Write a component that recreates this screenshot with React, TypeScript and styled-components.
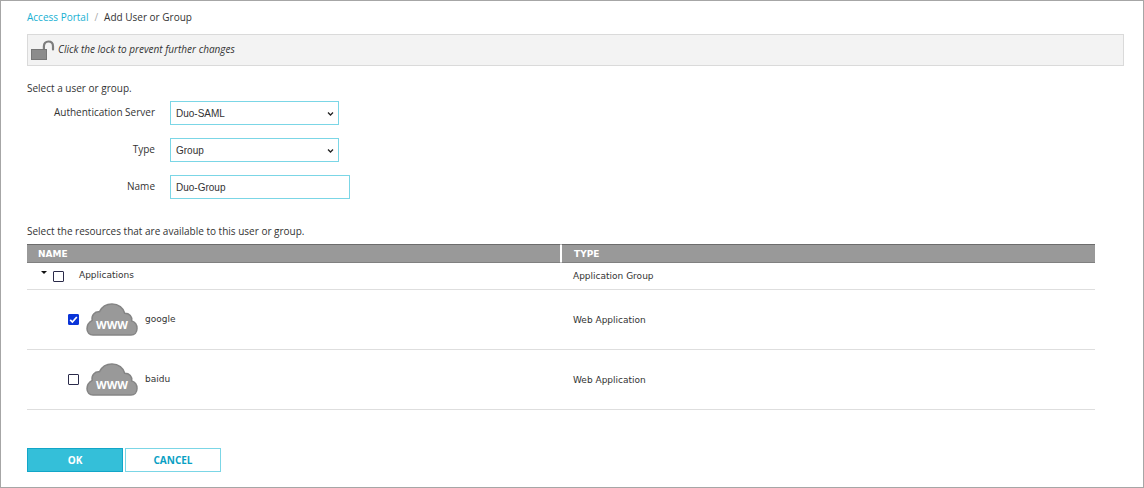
import React, { useState } from "react";
import styled, { createGlobalStyle } from "styled-components";

const GlobalStyle = createGlobalStyle`
  *, *::before, *::after { box-sizing: border-box; }
  body {
    margin: 0;
    background: #fff;
    color: #333;
    font-family: "Open Sans", "Noto Sans", sans-serif;
    font-size: 10px;
    line-height: 14px;
  }
`;

const Page = styled.main`
  min-height: 100vh;
  padding: 9px 19px 14px 26px;
  border: 1px solid #a6a6a6;
`;

const Breadcrumb = styled.nav`
  display: flex;
  gap: 6px;
`;

const Crumb = styled.a`
  color: #18b0d2;
  text-decoration: none;
`;

const Separator = styled.span`
  color: #aaa;
`;

const Notice = styled.div`
  display: flex;
  gap: 3px;
  height: 32px;
  margin-top: 10px;
  padding: 5px 3px;
  background: #f3f3f3;
  border: 1px solid #dadada;
  font-style: italic;
  line-height: 18px;
`;

const LockButton = styled.button`
  display: block;
  width: 24px;
  height: 21px;
  padding: 0;
  border: 0;
  background: none;
`;

const Prompt = styled.p<{ $top: number }>`
  margin: ${(p) => p.$top}px 0 6px;
`;

const Form = styled.form`
  display: grid;
  gap: 13px;
`;

const Field = styled.div`
  display: grid;
  grid-template-columns: 128px 1fr;
  column-gap: 15px;
  height: 24px;
`;

const Label = styled.label`
  text-align: right;
  line-height: 22px;
`;

const SelectWrap = styled.div`
  position: relative;
  width: 169px;
`;

const Select = styled.select`
  appearance: none;
  width: 100%;
  height: 24px;
  padding: 0 20px 0 5px;
  border: 1px solid #7bd6e6;
  border-radius: 0;
  background: #fff;
  color: #333;
  font: 10px "Liberation Sans", Arial, sans-serif;
`;

const Chevron = styled.svg`
  position: absolute;
  right: 5px;
  top: 10px;
  pointer-events: none;
`;

const TextInput = styled.input`
  width: 180px;
  height: 24px;
  padding: 0 5px;
  border: 1px solid #7bd6e6;
  border-radius: 0;
  color: #333;
  font: 10px "Liberation Sans", Arial, sans-serif;
`;

const Table = styled.table`
  width: calc(100% - 29px);
  table-layout: fixed;
  border-collapse: separate;
  border-spacing: 0;
  font-family: "DejaVu Sans", Verdana, sans-serif;
  font-size: 9px;
`;

const HeadCell = styled.th`
  height: 19px;
  padding: 0 11px;
  background: #999;
  border-top: 1px solid #6c6c6c;
  border-bottom: 1px solid #808080;
  color: #fff;
  text-align: left;
  font-size: 9px;
  line-height: 14px;
  &:first-child { border-right: 1px solid #fff; }
  & + & { border-left: 1px solid #fff; padding-left: 12px; }
`;

const Cell = styled.td<{ $tall?: boolean }>`
  height: ${(p) => (p.$tall ? 60 : 27)}px;
  padding: 0 12px;
  border-bottom: 1px solid #dedede;
  vertical-align: middle;
`;

const ResourceLine = styled.div<{ $child?: boolean }>`
  display: flex;
  align-items: center;
  padding-left: ${(p) => (p.$child ? 29 : 1)}px;
  gap: ${(p) => (p.$child ? 7 : 5)}px;
`;

const Toggle = styled.button`
  display: block;
  width: 8px;
  height: 12px;
  padding: 0;
  border: 0;
  background: none;
`;

const Checkbox = styled.input`
  appearance: none;
  flex: none;
  width: 11px;
  height: 11px;
  margin: 0;
  border: 1px solid #2b2b4a;
  border-radius: 1px;
  background: #fff;
  &:checked {
    border-color: #0a34d8;
    background: #0a34d8
      url("data:image/svg+xml,%3Csvg xmlns='http://www.w3.org/2000/svg' viewBox='0 0 9 9'%3E%3Cpath d='M1.2 4.8 3.4 7 7.8 2' fill='none' stroke='white' stroke-width='1.7'/%3E%3C/svg%3E")
      center / 9px 9px no-repeat;
  }
`;

const ResourceName = styled.label<{ $group?: boolean }>`
  padding-left: ${(p) => (p.$group ? 10 : 0)}px;
  padding-bottom: 2px;
`;

const CloudLabel = styled.text`
  fill: #fff;
  font: bold 11px "Open Sans", "Noto Sans", sans-serif;
`;

const Actions = styled.div`
  display: flex;
  gap: 2px;
  margin-top: 38px;
`;

const Button = styled.button<{ $primary?: boolean }>`
  width: 96px;
  height: 24px;
  padding: 0;
  border: 1px solid ${(p) => (p.$primary ? "#12a6c8" : "#7bd6e6")};
  background: ${(p) => (p.$primary ? "#34bfd9" : "#fff")};
  color: ${(p) => (p.$primary ? "#fff" : "#0a9fc4")};
  font: bold 10px "Open Sans", "Noto Sans", sans-serif;
`;

const LockIcon = () => (
  <svg width="24" height="21" viewBox="0 0 24 21" aria-hidden="true">
    <path
      d="M12.900 10V6.200C12.900 3.200 14.800 1.500 17.400 1.500S22 3.200 22 6.200V9.500"
      fill="none"
      stroke="#7d7d7d"
      strokeWidth="2.200"
      strokeLinecap="round"
    />
    <rect x="0.500" y="9.500" width="15" height="10" fill="#8c8c8c" stroke="#777" />
  </svg>
);

const CloudIcon = () => (
  <svg width="52" height="34" viewBox="0 0 52 34" aria-hidden="true">
    <path
      d="M7 32C3.400 32 1 29.300 1 25.800 1 21.800 3.200 19 6.200 17.300 5.200 12.200 8.800 8.300 13.400 8.800 15.800 3.900 20.600 1 26 1 32.500 1 37.400 4.900 38.700 10.200 43.500 10.200 46.500 13.600 45.700 17.900 49.100 19 51 21.900 51 25.400 51 29.300 48.600 32 45 32Z"
      fill="#999"
      stroke="#858585"
      strokeWidth="1.500"
    />
    <CloudLabel x="26" y="26" textAnchor="middle">
      WWW
    </CloudLabel>
  </svg>
);

const SelectField = ({ id, label, options }: { id: string; label: string; options: string[] }) => (
  <Field>
    <Label htmlFor={id}>{label}</Label>
    <SelectWrap>
      <Select id={id}>
        {options.map((o) => (
          <option key={o}>{o}</option>
        ))}
      </Select>
      <Chevron width="7" height="6" viewBox="0 0 7 6" aria-hidden="true">
        <path d="M1 1.500 3.500 4 6 1.500" fill="none" stroke="#222" strokeWidth="1.300" />
      </Chevron>
    </SelectWrap>
  </Field>
);

export default function App() {
  const [resources, setResources] = useState([
    { name: "google", type: "Web Application", checked: true },
    { name: "baidu", type: "Web Application", checked: false },
  ]);
  const toggle = (name: string) =>
    setResources((list) => list.map((r) => (r.name === name ? { ...r, checked: !r.checked } : r)));

  return (
    <>
      <GlobalStyle />
      <Page>
        <Breadcrumb aria-label="Breadcrumb">
          <Crumb href="#portal">Access Portal</Crumb>
          <Separator>/</Separator>
          <span>Add User or Group</span>
        </Breadcrumb>
        <Notice>
          <LockButton type="button" aria-label="Lock">
            <LockIcon />
          </LockButton>
          <span>Click the lock to prevent further changes</span>
        </Notice>
        <Prompt $top={15}>Select a user or group.</Prompt>
        <Form>
          <SelectField id="server" label="Authentication Server" options={["Duo-SAML"]} />
          <SelectField id="type" label="Type" options={["Group", "User"]} />
          <Field>
            <Label htmlFor="name">Name</Label>
            <TextInput id="name" defaultValue="Duo-Group" />
          </Field>
        </Form>
        <Prompt $top={25}>Select the resources that are available to this user or group.</Prompt>
        <Table>
          <thead>
            <tr>
              <HeadCell>NAME</HeadCell>
              <HeadCell>TYPE</HeadCell>
            </tr>
          </thead>
          <tbody>
            <tr>
              <Cell>
                <ResourceLine>
                  <Toggle type="button" aria-label="Collapse Applications">
                    <svg width="8" height="12" viewBox="0 0 8 12" aria-hidden="true">
                      <path d="M1 1H7L4 4Z" fill="#111" />
                    </svg>
                  </Toggle>
                  <Checkbox type="checkbox" id="applications" />
                  <ResourceName $group htmlFor="applications">Applications</ResourceName>
                </ResourceLine>
              </Cell>
              <Cell>Application Group</Cell>
            </tr>
            {resources.map((r) => (
              <tr key={r.name}>
                <Cell $tall>
                  <ResourceLine $child>
                    <Checkbox type="checkbox" id={r.name} checked={r.checked} onChange={() => toggle(r.name)} />
                    <CloudIcon />
                    <ResourceName htmlFor={r.name}>{r.name}</ResourceName>
                  </ResourceLine>
                </Cell>
                <Cell $tall>{r.type}</Cell>
              </tr>
            ))}
          </tbody>
        </Table>
        <Actions>
          <Button type="button" $primary>OK</Button>
          <Button type="button">CANCEL</Button>
        </Actions>
      </Page>
    </>
  );
}
